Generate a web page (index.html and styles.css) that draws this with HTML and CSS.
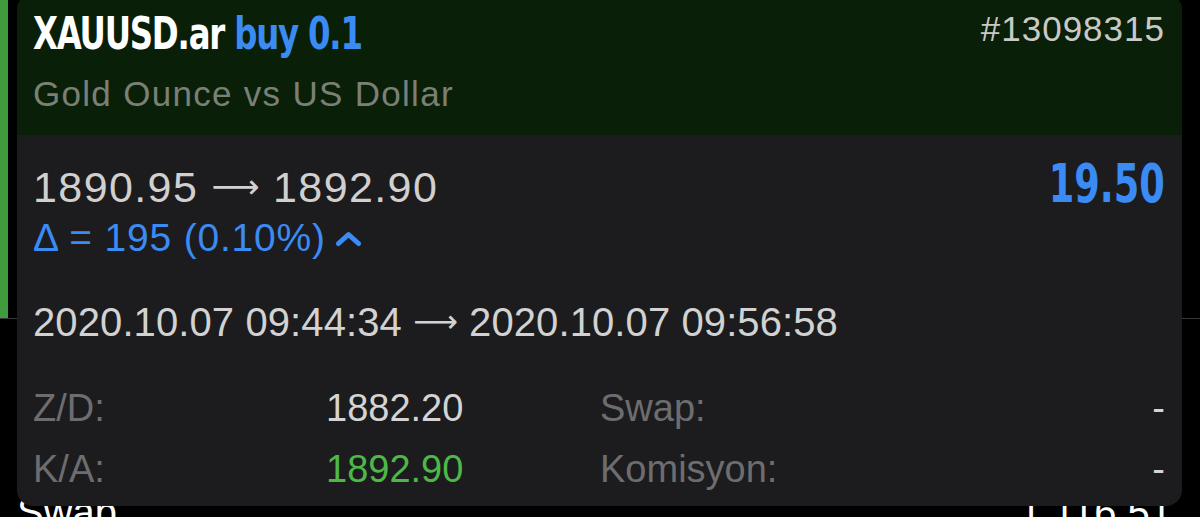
FILE: index.html
```html
<!DOCTYPE html>
<html lang="tr">
  <head>
    <meta charset="UTF-8" />
    <meta name="viewport" content="width=device-width, initial-scale=1.0"/>
    <title>XAUUSD.ar buy 0.1</title>
    <link rel="stylesheet" href="styles.css">
  </head>
  <body>
    <div class="screen">
      <!-- list behind the popup -->
      <div class="list">
        <div class="row row-active">
          <div class="row-mark"></div>
        </div>
        <div class="row row-next">
          <span>Swap</span>
          <span>1 116.51</span>
        </div>
      </div>

      <div class="deal-card">
        <div class="deal-head">
          <div class="deal-name">
            <div class="deal-title">XAUUSD.ar <span class="blue">buy 0.1</span></div>
            <div class="deal-desc">Gold Ounce vs US Dollar</div>
          </div>
          <div class="deal-id">#13098315</div>
        </div>

        <div class="deal-body">
          <div class="price-row">
            <div class="prices">1890.95 <span class="arrow">⟶</span> 1892.90</div>
            <div class="profit">19.50</div>
          </div>
          <div class="delta">
            Δ = 195 (0.10%)
            <svg class="chevron" width="27" height="16" viewBox="0 0 27 16">
              <polyline points="3.5,12.5 13.5,3.5 23.5,12.5" fill="none" stroke="#3b8bf4" stroke-width="5" stroke-linecap="round" stroke-linejoin="round"/>
            </svg>
          </div>
          <div class="times">2020.10.07 09:44:34 <span class="arrow">⟶</span> 2020.10.07 09:56:58</div>

          <div class="details">
            <div class="label">Z/D:</div>
            <div class="value">1882.20</div>
            <div class="label">Swap:</div>
            <div class="value right">-</div>

            <div class="label">K/A:</div>
            <div class="value green">1892.90</div>
            <div class="label">Komisyon:</div>
            <div class="value right">-</div>
          </div>
        </div>
      </div>
    </div>
  </body>
</html>
```

FILE: styles.css
```css
* {
  margin: 0;
  padding: 0;
  box-sizing: border-box;
}

body {
  background: #000;
  font-family: "Liberation Sans", Arial, sans-serif;
  overflow: hidden;
}

.screen {
  position: relative;
  width: 1200px;
  height: 517px;
  overflow: hidden;
}

/* list rows under the popup */
.row {
  display: flex;
}

.row-active {
  height: 319px;
  border-bottom: 1px solid #38383a;
}

.row-mark {
  width: 8px;
  height: 318px;
  background: #3f9b3b;
}

.row-next {
  justify-content: space-between;
  padding: 170px 28px 0 17px;
  font-size: 40px;
  line-height: 46px;
  color: #fff;
}

/* popup card */
.deal-card {
  position: absolute;
  top: -6px;
  left: 17px;
  right: 18px;
  bottom: 11px;
  border-radius: 16px;
  overflow: hidden;
  background: #1c1c1e;
}

.deal-head {
  display: flex;
  justify-content: space-between;
  align-items: flex-start;
  height: 141px;
  padding: 15px 17px 0 16px;
  background: #0a1f08;
}

.deal-title {
  font-family: "DejaVu Sans Condensed", "Liberation Sans", sans-serif;
  font-weight: 700;
  font-size: 45px;
  line-height: 50px;
  letter-spacing: -1.5px;
  color: #fff;
  white-space: nowrap;
  transform: scaleX(0.8);
  transform-origin: left center;
}

.blue {
  color: #3b8bf4;
}

.deal-desc {
  margin-top: 15px;
  font-size: 35px;
  line-height: 40px;
  letter-spacing: 1.3px;
  color: #7a8076;
}

.deal-id {
  font-size: 35px;
  line-height: 40px;
  letter-spacing: 1px;
  color: #c9cac7;
}

.deal-body {
  padding: 24px 17px 0 16px;
}

.price-row {
  display: flex;
  justify-content: space-between;
  align-items: baseline;
}

.prices {
  font-size: 43px;
  line-height: 50px;
  letter-spacing: 1.4px;
  color: #d0d0d0;
}

.arrow {
  font-family: "DejaVu Sans", sans-serif;
  font-size: 0.78em;
  letter-spacing: 0;
  vertical-align: 0.12em;
}

.profit {
  font-family: "DejaVu Sans Condensed", "Liberation Sans", sans-serif;
  font-weight: 700;
  font-size: 53px;
  line-height: 50px;
  color: #3b8bf4;
  transform: scaleX(0.77);
  transform-origin: right center;
}

.delta {
  display: flex;
  align-items: center;
  gap: 9px;
  margin-top: 4px;
  font-size: 39px;
  line-height: 44px;
  letter-spacing: 0.8px;
  color: #3b8bf4;
}

.chevron {
  margin-top: 2px;
}

.times {
  margin-top: 38px;
  font-size: 40px;
  line-height: 46px;
  letter-spacing: 0.1px;
  color: #d2d2d2;
}

.details {
  display: grid;
  grid-template-columns: 293px 274px 1fr auto;
  margin-top: 33px;
  font-size: 38px;
  line-height: 61px;
}

.label {
  color: #6d6d70;
}

.value {
  color: #d4d4d4;
}

.value.right {
  text-align: right;
}

.value.green {
  color: #4db848;
}
```
